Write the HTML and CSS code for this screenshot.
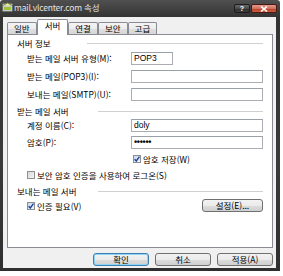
FILE: index.html
```html
<!DOCTYPE html>
<html lang="ko">
<head>
<meta charset="utf-8">
<title>mail.vlcenter.com 속성</title>
<link rel="stylesheet" href="styles.css">
</head>
<body>
<div class="window">
  <div class="titlebar">
    <svg class="app-icon" width="11" height="10" viewBox="0 0 11 10">
      <rect x="0.5" y="1.5" width="10" height="8" rx="1" fill="#c9ccc6" stroke="#6d7069"/>
      <path d="M1 3.5 L5.5 1 L10 3.5" fill="#e9f0a8" stroke="#7d8a3a"/>
      <rect x="2" y="5" width="7" height="3" fill="#9fc23c"/>
    </svg>
    <span class="title">mail.vlcenter.com 속성</span>
    <div class="caption-buttons">
      <span class="cap-btn help">?</span>
      <span class="cap-btn close">
        <svg width="8" height="6" viewBox="0 0 8 6"><path d="M1 0.5 L7 5.5 M7 0.5 L1 5.5" stroke="#fff" stroke-width="1.6"/></svg>
      </span>
    </div>
  </div>
  <div class="client">
    <div class="tabs">
      <div class="tab">일반</div>
      <div class="tab selected">서버</div>
      <div class="tab">연결</div>
      <div class="tab">보안</div>
      <div class="tab">고급</div>
    </div>
    <div class="panel">
      <div class="group-title gt-short"><span>서버 정보</span></div>
      <div class="form form-server">
        <span class="label">받는 메일 서버 유형(M):</span><div class="field short">POP3</div>
        <span class="label">받는 메일(POP3)(I):</span><div class="field"></div>
        <span class="label">보내는 메일(SMTP)(U):</span><div class="field"></div>
      </div>
      <div class="group-title gt-long gt-2"><span>받는 메일 서버</span></div>
      <div class="form form-account">
        <span class="label">계정 이름(C):</span><div class="field">doly</div>
        <span class="label">암호(P):</span><div class="field password">••••••</div>
      </div>
      <div class="check-row save-pw"><span class="checkbox checked"><svg width="6" height="6" viewBox="0 0 6 6"><path d="M0.6 3.2 L2.3 5 L5.5 0.6" fill="none" stroke="#1d3f9a" stroke-width="1.4"/></svg></span>암호 저장(W)</div>
      <div class="check-row spa"><span class="checkbox"></span>보안 암호 인증을 사용하여 로그온(S)</div>
      <div class="group-title gt-long gt-3"><span>보내는 메일 서버</span></div>
      <div class="auth-row">
        <div class="check-row"><span class="checkbox checked"><svg width="6" height="6" viewBox="0 0 6 6"><path d="M0.6 3.2 L2.3 5 L5.5 0.6" fill="none" stroke="#1d3f9a" stroke-width="1.4"/></svg></span>인증 필요(V)</div>
        <div class="btn settings">설정(E)...</div>
      </div>
    </div>
    <div class="dialog-buttons">
      <div class="btn default">확인</div>
      <div class="btn">취소</div>
      <div class="btn">적용(A)</div>
    </div>
  </div>
</div>
</body>
</html>
```

FILE: styles.css
```css
html, body {
  margin: 0;
  padding: 0;
  background: #ffffff;
}

body {
  font-family: "Noto Sans CJK KR", "Noto Sans", sans-serif;
  font-size: 8.5px;
  color: #000;
}

.window {
  width: 280px;
  height: 271px;
  box-sizing: border-box;
  padding: 0 4px 3px 3px;
  display: flex;
  flex-direction: column;
  background: linear-gradient(#505050, #333333 17px, #3a3a3a 60%, #2f2f2f);
  border-radius: 3px 3px 0 0;
}

.titlebar {
  height: 17px;
  flex: none;
  display: flex;
  align-items: flex-start;
  margin: 0 -4px 0 -3px;
  padding-left: 2px;
}

.app-icon {
  margin-top: 2px;
  flex: none;
}

.title {
  margin-left: 1px;
  margin-top: 2px;
  line-height: 11px;
  color: #e4e4e4;
  font-size: 8.5px;
  letter-spacing: -0.2px;
}

.caption-buttons {
  margin-left: auto;
  margin-right: 3px;
  margin-top: 4px;
  display: flex;
  gap: 1px;
}

.cap-btn {
  height: 9px;
  box-sizing: border-box;
  border: 1px solid #1c1c1c;
  border-radius: 2px;
  display: flex;
  align-items: center;
  justify-content: center;
  color: #fff;
  font-family: "Liberation Sans", sans-serif;
  font-weight: bold;
  font-size: 7px;
  line-height: 7px;
}

.cap-btn.help {
  width: 16px;
  background: linear-gradient(#6b6b6b, #4a4a4a 50%, #2e2e2e 51%, #3f3f3f);
}

.cap-btn.close {
  width: 26px;
  background: linear-gradient(#e49a8c, #d0705f 50%, #b83c26 51%, #cd5f44);
  border-color: #4a1a12;
}

.client {
  flex: 1;
  background: #f0f0f0;
  display: flex;
  flex-direction: column;
}

.tabs {
  flex: none;
  height: 15px;
  margin-top: 2px;
  padding-left: 4px;
  display: flex;
  align-items: flex-end;
}

.tab {
  height: 12px;
  box-sizing: border-box;
  padding: 0 6px;
  border: 1px solid #898c95;
  border-bottom: none;
  border-radius: 2px 2px 0 0;
  background: linear-gradient(#f4f4f4, #ececec 50%, #e0e0e0 51%, #d6d6d6);
  line-height: 11px;
  white-space: nowrap;
}

.tab.selected {
  height: 16px;
  margin-bottom: -1px;
  padding: 0 7px;
  background: #ffffff;
  line-height: 11px;
  position: relative;
  z-index: 1;
}

.panel {
  flex: none;
  height: 214px;
  box-sizing: border-box;
  margin: 0 3px 0 4px;
  padding: 0 9px;
  background: #ffffff;
  border: 1px solid #898c95;
  display: flex;
  flex-direction: column;
}

.group-title {
  height: 10px;
  line-height: 10px;
  display: flex;
  align-items: center;
  margin-top: 3px;
  white-space: nowrap;
}

.group-title::after {
  content: "";
  flex: 1;
  height: 1px;
  background: #d0d0d0;
}

.gt-short span { width: 70px; }
.gt-long span { width: 81px; }
.gt-2 { margin-top: 5px; }
.gt-3 { margin-top: 6px; }

.form {
  display: grid;
  grid-template-columns: 104px 1fr;
  margin-left: 10px;
  align-items: center;
}

.form-server {
  margin-top: 4px;
  row-gap: 5px;
}

.form-account {
  margin-top: 3px;
  row-gap: 4px;
}

.label {
  line-height: 13px;
  white-space: nowrap;
}

.field {
  height: 13px;
  box-sizing: border-box;
  border: 1px solid #abadb3;
  border-top-color: #9aa0a8;
  background: #fff;
  padding-left: 2px;
  line-height: 11px;
  font-family: "Liberation Sans", "Noto Sans CJK KR", sans-serif;
}

.field.short {
  width: 42px;
}

.field.password {
  font-weight: bold;
  font-size: 9px;
  letter-spacing: -0.3px;
}

.check-row {
  height: 10px;
  line-height: 10px;
  display: flex;
  align-items: center;
  gap: 2px;
  white-space: nowrap;
}

.save-pw {
  margin-top: 5px;
  margin-left: 116px;
}

.spa {
  margin-top: 6px;
  margin-left: 10px;
}

.checkbox {
  width: 8px;
  height: 8px;
  box-sizing: border-box;
  border: 1px solid #8e8f8f;
  background: linear-gradient(135deg, #d8d8d8, #f6f6f6);
  display: flex;
  align-items: center;
  justify-content: center;
  flex: none;
}

.checkbox.checked {
  background: linear-gradient(135deg, #c6d6ec, #f4f8fc);
}

.auth-row {
  margin-top: 3px;
  margin-left: 10px;
  height: 13px;
  display: flex;
  align-items: center;
  justify-content: space-between;
}

.btn {
  height: 13px;
  box-sizing: border-box;
  width: 56px;
  border: 1px solid #707070;
  border-radius: 3px;
  background: linear-gradient(#f2f2f2, #ebebeb 50%, #dddddd 51%, #cfcfcf);
  text-align: center;
  line-height: 11px;
  white-space: nowrap;
}

.btn.settings {
  width: 61px;
}

.btn.default {
  border-color: #3c7fb1;
  box-shadow: inset 0 0 0 1px #8fd3f5;
}

.dialog-buttons {
  margin: 5px 3px 0 0;
  display: flex;
  justify-content: flex-end;
  gap: 6px;
}
```
